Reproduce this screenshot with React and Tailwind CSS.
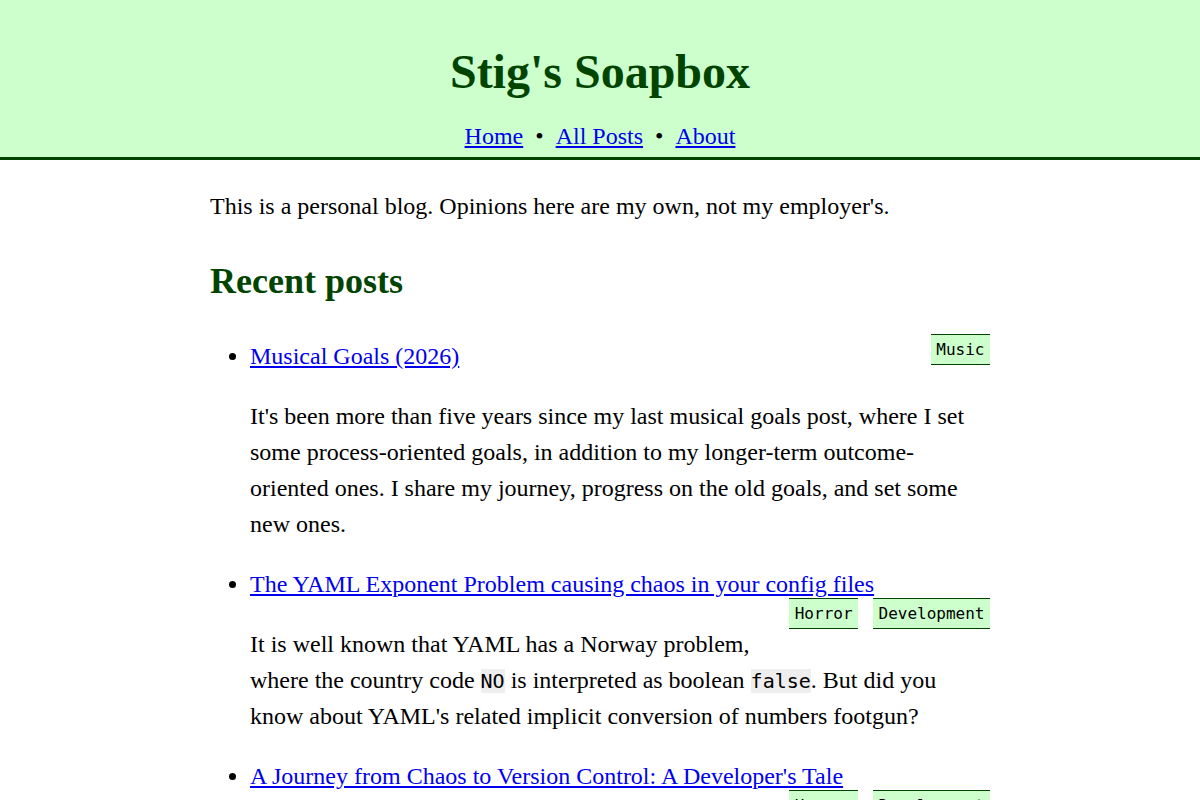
const codeCls = "bg-[#eeeeee] font-['DejaVu_Sans_Mono',monospace] text-[20px] leading-[1]";

const posts = [
  {
    title: "Musical Goals (2026)",
    tags: ["Music"],
    body: (
      <>
        It's been more than five years since my last musical goals post, where I
        set some process-oriented goals, in addition to my longer-term
        outcome-oriented ones. I share my journey, progress on the old goals,
        and set some new ones.
      </>
    ),
  },
  {
    title: "The YAML Exponent Problem causing chaos in your config files",
    tags: ["Horror", "Development"],
    body: (
      <>
        It is well known that YAML has a Norway problem, where the country code{" "}
        <code className={codeCls}>NO</code> is interpreted as boolean{" "}
        <code className={codeCls}>false</code>. But did you know about YAML's
        related implicit conversion of numbers footgun?
      </>
    ),
  },
  {
    title: "A Journey from Chaos to Version Control: A Developer's Tale",
    tags: ["Horror", "Development"],
    body: (
      <>
        How I went from emailing zip files to myself to a proper version
        control workflow, and what I learned along the way.
      </>
    ),
  },
];

function Tags({ tags }) {
  return (
    <span className="float-right mt-[-4px] flex gap-[15px]">
      {tags.map((t) => (
        <span
          key={t}
          className="bg-[#ccffcc] border-y border-[#004400] px-[5.5px] py-[2.5px] font-['DejaVu_Sans_Mono',monospace] text-[16px] leading-[24px] text-black"
        >
          {t}
        </span>
      ))}
    </span>
  );
}

export default function App() {
  return (
    <div className="min-h-screen bg-white font-['Liberation_Serif',serif] text-[24px] leading-[36px] text-black">
      <header className="bg-[#ccffcc] border-b-[3px] border-[#004400] pt-[36px] pb-[3px] text-center">
        <h1 className="text-[48px] leading-[72px] font-bold text-[#004400]">
          Stig's Soapbox
        </h1>
        <nav className="mt-[10px] leading-[36px]">
          <a href="#" className="text-[#0000ee] underline">Home</a>
          <span className="mx-[12px]">•</span>
          <a href="#" className="text-[#0000ee] underline">All Posts</a>
          <span className="mx-[12px]">•</span>
          <a href="#" className="text-[#0000ee] underline">About</a>
        </nav>
      </header>

      <main className="max-w-[780px] mx-auto pt-[28px]">
        <p>This is a personal blog. Opinions here are my own, not my employer's.</p>
        <h2 className="mt-[30px] text-[36px] leading-[54px] font-bold text-[#004400]">
          Recent posts
        </h2>
        <ul className="mt-[30px] pl-[40px] list-disc">
          {posts.map((p) => (
            <li key={p.title} className="mb-[24px]">
              <a href="#" className="text-[#0000ee] underline">{p.title}</a>
              <Tags tags={p.tags} />
              <p className="mt-[24px]">{p.body}</p>
            </li>
          ))}
        </ul>
      </main>
    </div>
  );
}
